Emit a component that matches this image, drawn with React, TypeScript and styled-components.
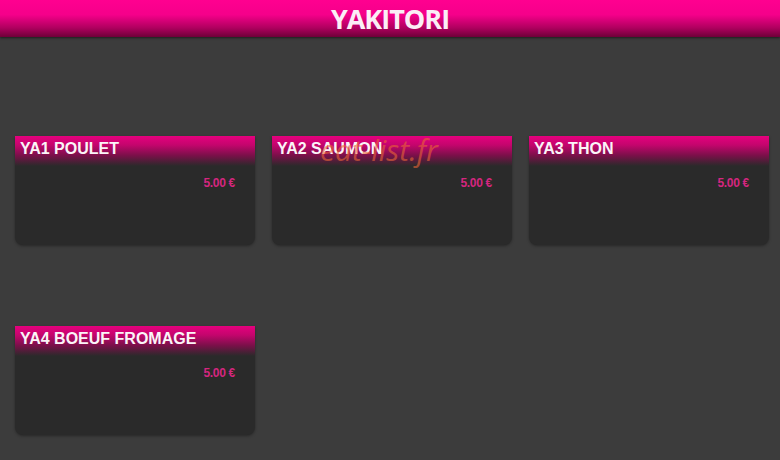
import React from "react";
import styled, { createGlobalStyle } from "styled-components";

const GlobalStyle = createGlobalStyle`
  html, body {
    margin: 0;
    padding: 0;
    background: #3c3c3c;
  }
  body {
    font-family: "Liberation Sans", Arial, sans-serif;
  }
`;

const Page = styled.div`
  position: relative;
  width: 780px;
  height: 460px;
  overflow: hidden;
  background: #3c3c3c;
`;

const Header = styled.header`
  height: 37px;
  display: flex;
  align-items: center;
  justify-content: center;
  background: linear-gradient(to bottom, #ff0090 0%, #f5008a 40%, #b0005f 75%, #6e0038 100%);
  box-shadow: 0 1px 2px rgba(0, 0, 0, 0.5);
`;

const Title = styled.h1`
  margin: 0;
  font-family: "Open Sans", sans-serif;
  font-weight: 700;
  font-size: 27px;
  letter-spacing: -1px;
  line-height: 37px;
  color: #fbeef6;
`;

const Grid = styled.div`
  display: grid;
  grid-template-columns: repeat(3, 240px);
  column-gap: 17px;
  row-gap: 81px;
  padding: 99px 0 0 15px;
`;

const Card = styled.div`
  height: 109px;
  background: #2a2a2a;
  border-radius: 0 0 8px 8px;
  box-shadow: 0 1px 3px rgba(0, 0, 0, 0.35);
  display: flex;
  flex-direction: column;
`;

const CardHead = styled.div`
  height: 30px;
  padding: 4px 0 0 5px;
  box-sizing: border-box;
  background: linear-gradient(to bottom, #e6007e 0%, #c4056d 30%, #7a1049 65%, #2a2a2a 100%);
`;

const CardTitle = styled.div`
  font-weight: bold;
  font-size: 16px;
  line-height: 18px;
  color: #fbf4f8;
`;

const Price = styled.div`
  align-self: flex-end;
  margin: 10px 20px 0 0;
  font-weight: bold;
  font-size: 12px;
  letter-spacing: -0.3px;
  color: #d4267f;
`;

const Watermark = styled.div`
  position: absolute;
  left: 320px;
  top: 129px;
  font-family: "Open Sans", sans-serif;
  font-style: italic;
  font-size: 30px;
  color: rgba(235, 100, 55, 0.6);
  pointer-events: none;
`;

const items = [
  { name: "YA1 POULET", price: "5.00 €" },
  { name: "YA2 SAUMON", price: "5.00 €" },
  { name: "YA3 THON", price: "5.00 €" },
  { name: "YA4 BOEUF FROMAGE", price: "5.00 €" },
];

const App: React.FC = () => {
  return (
    <Page>
      <GlobalStyle />
      <Header>
        <Title>YAKITORI</Title>
      </Header>
      <Grid>
        {items.map((item) => (
          <Card key={item.name}>
            <CardHead>
              <CardTitle>{item.name}</CardTitle>
            </CardHead>
            <Price>{item.price}</Price>
          </Card>
        ))}
      </Grid>
      <Watermark>eat-list.fr</Watermark>
    </Page>
  );
};

export default App;
